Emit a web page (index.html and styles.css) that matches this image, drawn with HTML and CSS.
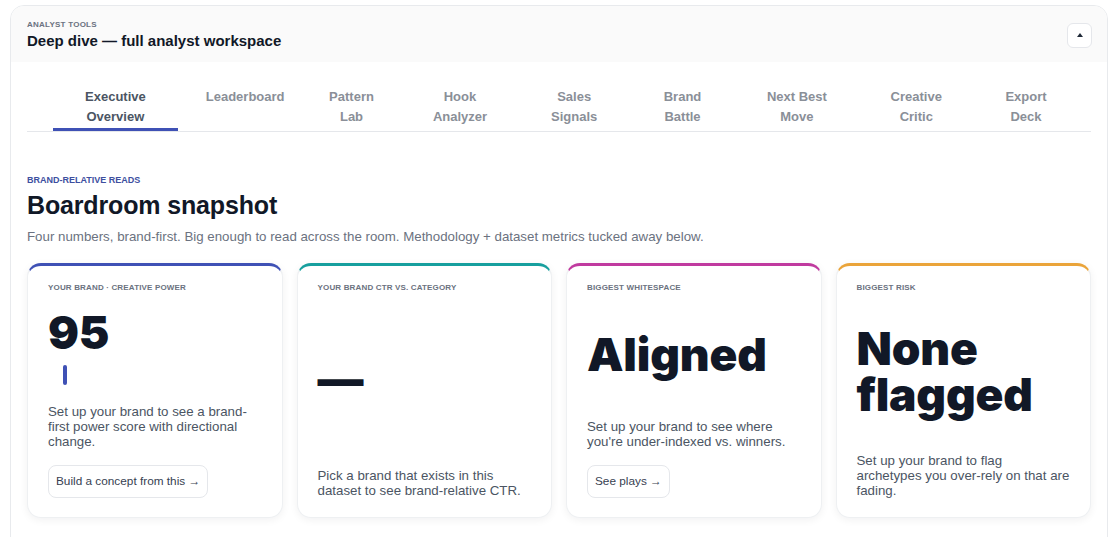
FILE: index.html
```html
<!DOCTYPE html>
<html lang="en">
<head>
<meta charset="utf-8">
<title>Deep dive — full analyst workspace</title>
<link rel="stylesheet" href="styles.css">
</head>
<body>
<div class="panel">
  <header class="panel-head">
    <div class="head-text">
      <div class="eyebrow">ANALYST TOOLS</div>
      <h1 class="panel-title">Deep dive — full analyst workspace</h1>
    </div>
    <button class="collapse" aria-label="Collapse">
      <svg width="6" height="4" viewBox="0 0 6 4"><polygon points="3,0 6,4 0,4" fill="#1f2937"/></svg>
    </button>
  </header>
  <div class="panel-body">
    <nav class="tabs">
      <a class="tab active">Executive Overview</a>
      <a class="tab">Leaderboard</a>
      <a class="tab">Pattern Lab</a>
      <a class="tab">Hook Analyzer</a>
      <a class="tab">Sales Signals</a>
      <a class="tab">Brand Battle</a>
      <a class="tab">Next Best Move</a>
      <a class="tab">Creative Critic</a>
      <a class="tab">Export Deck</a>
    </nav>
    <section class="snapshot">
      <div class="kicker">BRAND-RELATIVE READS</div>
      <h2 class="snap-title">Boardroom snapshot</h2>
      <p class="lede">Four numbers, brand-first. Big enough to read across the room. Methodology + dataset metrics tucked away below.</p>
      <div class="cards">
        <article class="card card-blue">
          <div class="card-label">Your brand · Creative power</div>
          <div class="card-value">
            <div class="big">95</div>
            <div class="spark"></div>
          </div>
          <p class="card-desc">Set up your brand to see a brand-first power score with directional change.</p>
          <button class="card-btn">Build a concept from this →</button>
        </article>
        <article class="card card-teal">
          <div class="card-label">Your brand CTR vs. category</div>
          <div class="card-value">
            <div class="big">—</div>
          </div>
          <p class="card-desc">Pick a brand that exists in this dataset to see brand-relative CTR.</p>
        </article>
        <article class="card card-magenta">
          <div class="card-label">Biggest whitespace</div>
          <div class="card-value">
            <div class="big">Aligned</div>
          </div>
          <p class="card-desc">Set up your brand to see where you're under-indexed vs. winners.</p>
          <button class="card-btn">See plays →</button>
        </article>
        <article class="card card-orange">
          <div class="card-label">Biggest risk</div>
          <div class="card-value">
            <div class="big">None flagged</div>
          </div>
          <p class="card-desc">Set up your brand to flag archetypes you over-rely on that are fading.</p>
        </article>
      </div>
    </section>
  </div>
</div>
</body>
</html>
```
FILE: styles.css
```css
* { box-sizing: border-box; }

body {
  margin: 5px 4px 0 10px;
  font-family: "Liberation Sans", Arial, sans-serif;
  background: #ffffff;
  color: #111827;
}

.panel {
  border: 1px solid #e8eaed;
  border-radius: 14px;
  overflow: hidden;
  background: #ffffff;
}

.panel-head {
  display: flex;
  align-items: center;
  justify-content: space-between;
  padding: 14px 15px 12px 16px;
  background: #fafafa;
}

.eyebrow {
  font-size: 8px;
  line-height: 10px;
  font-weight: 700;
  letter-spacing: 0.03em;
  color: #6b7280;
  margin-bottom: 2px;
}

.panel-title {
  margin: 0;
  font-size: 15px;
  line-height: 18px;
  font-weight: 700;
  color: #111827;
}

.collapse {
  width: 25px;
  height: 25px;
  border: 1px solid #e5e7eb;
  border-radius: 6px;
  background: #ffffff;
  padding: 0;
  display: flex;
  align-items: center;
  justify-content: center;
}

.panel-body {
  padding: 25px 16px 40px;
}

.tabs {
  display: flex;
  gap: 22px;
  padding: 0 24px 0 26px;
  border-bottom: 1px solid #e5e7eb;
}

.tab {
  flex: 1 1 auto;
  text-align: center;
  padding: 0 6px 1px;
  font-size: 13px;
  line-height: 20px;
  font-weight: 700;
  color: #8a8f98;
  border-bottom: 3px solid transparent;
  text-decoration: none;
}

.tab.active {
  color: #4b5563;
  border-bottom-color: #3f51b5;
}

.snapshot {
  padding-top: 42px;
}

.kicker {
  font-size: 9px;
  line-height: 12px;
  font-weight: 700;
  color: #3d4f9f;
}

.snap-title {
  margin: 4px 0 0;
  font-size: 25px;
  line-height: 30px;
  font-weight: 700;
  letter-spacing: -0.15px;
  color: #111827;
}

.lede {
  margin: 8px 0 0;
  font-size: 13.3px;
  line-height: 18px;
  color: #6b7280;
}

.cards {
  display: grid;
  grid-template-columns: repeat(4, 1fr);
  gap: 14px;
  margin-top: 17px;
}

.card {
  min-height: 255px;
  display: flex;
  flex-direction: column;
  padding: 17px 20px 19px;
  border: 1px solid #eef0f2;
  border-top: 3px solid #3f51b5;
  border-radius: 14px;
  background: #ffffff;
  box-shadow: 0 2px 8px rgba(17, 24, 39, 0.06);
}

.card-blue { border-top-color: #3f51b5; }
.card-teal { border-top-color: #179f9e; }
.card-magenta { border-top-color: #c03a9f; }
.card-orange { border-top-color: #eaa43a; }

.card-label {
  font-size: 8px;
  line-height: 10px;
  font-weight: 700;
  letter-spacing: 0.02em;
  text-transform: uppercase;
  color: #6b7280;
}

.card-value {
  flex: 1;
  display: flex;
  flex-direction: column;
  justify-content: center;
  padding: 2px 0;
}

.big {
  font-family: Inter, "Liberation Sans", sans-serif;
  font-weight: 900;
  font-size: 46px;
  line-height: 46px;
  letter-spacing: -0.2px;
  color: #111827;
}

.spark {
  margin: 10px 0 0 15px;
  width: 4px;
  height: 20px;
  border-radius: 2px;
  background: #3f51b5;
}

.card-desc {
  margin: 4px 0 0;
  font-size: 13.3px;
  line-height: 15px;
  color: #4b5563;
}

.card-btn {
  align-self: flex-start;
  margin-top: 16px;
  padding: 8px 7px;
  border: 1px solid #e5e7eb;
  border-radius: 8px;
  background: #ffffff;
  font-family: "Liberation Sans", Arial, sans-serif;
  font-size: 11.8px;
  line-height: 15px;
  color: #374151;
}
```
